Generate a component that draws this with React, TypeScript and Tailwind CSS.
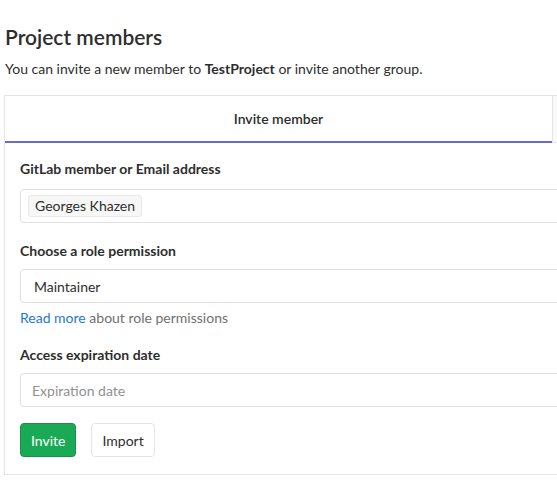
import React from 'react'

const font = { fontFamily: 'Lato, "Noto Sans", Arial, sans-serif' }

function Label({ children }: { children: React.ReactNode }) {
  return <p className="h-5 text-[14px] font-bold leading-5 text-[#2e2e2e]">{children}</p>
}

export default function App() {
  return (
    <div className="h-[483px] w-[557px] overflow-hidden bg-white text-[#2e2e2e]" style={font}>
      <div className="w-[1110px] pl-[5px]">
        {/* ── Kop ───────────────────────────────────────────── */}
        <h3 className="pt-[24px] text-[21px] font-semibold leading-[26px] text-[#2e2e2e]">Project members</h3>
        <p className="mt-[9px] text-[14px] leading-5">
          You can invite a new member to <strong>TestProject</strong> or invite another group.
        </p>

        {/* ── Kaart ─────────────────────────────────────────── */}
        <div className="-ml-px mt-[16px] border border-[#e5e5e5]">
          <div className="flex">
            <div className="flex h-[47px] w-[547px] items-center justify-center border-b-2 border-[#6b6bcc] pb-[1px] text-[14px] font-semibold">
              Invite member
            </div>
            <div className="h-[47px] flex-1 border-b border-l border-[#e5e5e5] bg-[#fafafa]" />
          </div>

          <div className="px-[15px] pb-[17px] pt-[16px]">
            <Label>GitLab member or Email address</Label>
            <div className="mt-[10px] flex h-[34px] items-center rounded-[4px] border border-[#dfdfdf] px-[7px]">
              <span className="rounded-[3px] border border-[#e9e9e9] bg-[#f7f7f7] px-[6px] text-[14px] leading-[20px]">
                Georges Khazen
              </span>
            </div>

            <div className="mt-[18px]">
              <Label>Choose a role permission</Label>
            </div>
            <div className="mt-[8px] flex h-[34px] items-center rounded-[4px] border border-[#dfdfdf] px-[13px] text-[14px]">
              Maintainer
            </div>
            <p className="mt-[5px] h-5 text-[14px] leading-5 text-[#707070]">
              <a className="text-[#1f78d1]">Read more</a> about role permissions
            </p>

            <div className="mt-[17px]">
              <Label>Access expiration date</Label>
            </div>
            <div className="mt-[8px] flex h-[34px] items-center rounded-[4px] border border-[#dfdfdf] px-[11px] text-[14px] text-[#919191]">
              Expiration date
            </div>

            <div className="mt-[16px] flex gap-[15px]">
              <button className="h-[34px] rounded-[4px] border border-[#168f48] bg-[#1aaa55] px-[10px] text-[14px] text-white">
                Invite
              </button>
              <button className="h-[34px] rounded-[4px] border border-[#e5e5e5] bg-white px-[10px] text-[14px] text-[#2e2e2e]">
                Import
              </button>
            </div>
          </div>
        </div>
      </div>
    </div>
  )
}
